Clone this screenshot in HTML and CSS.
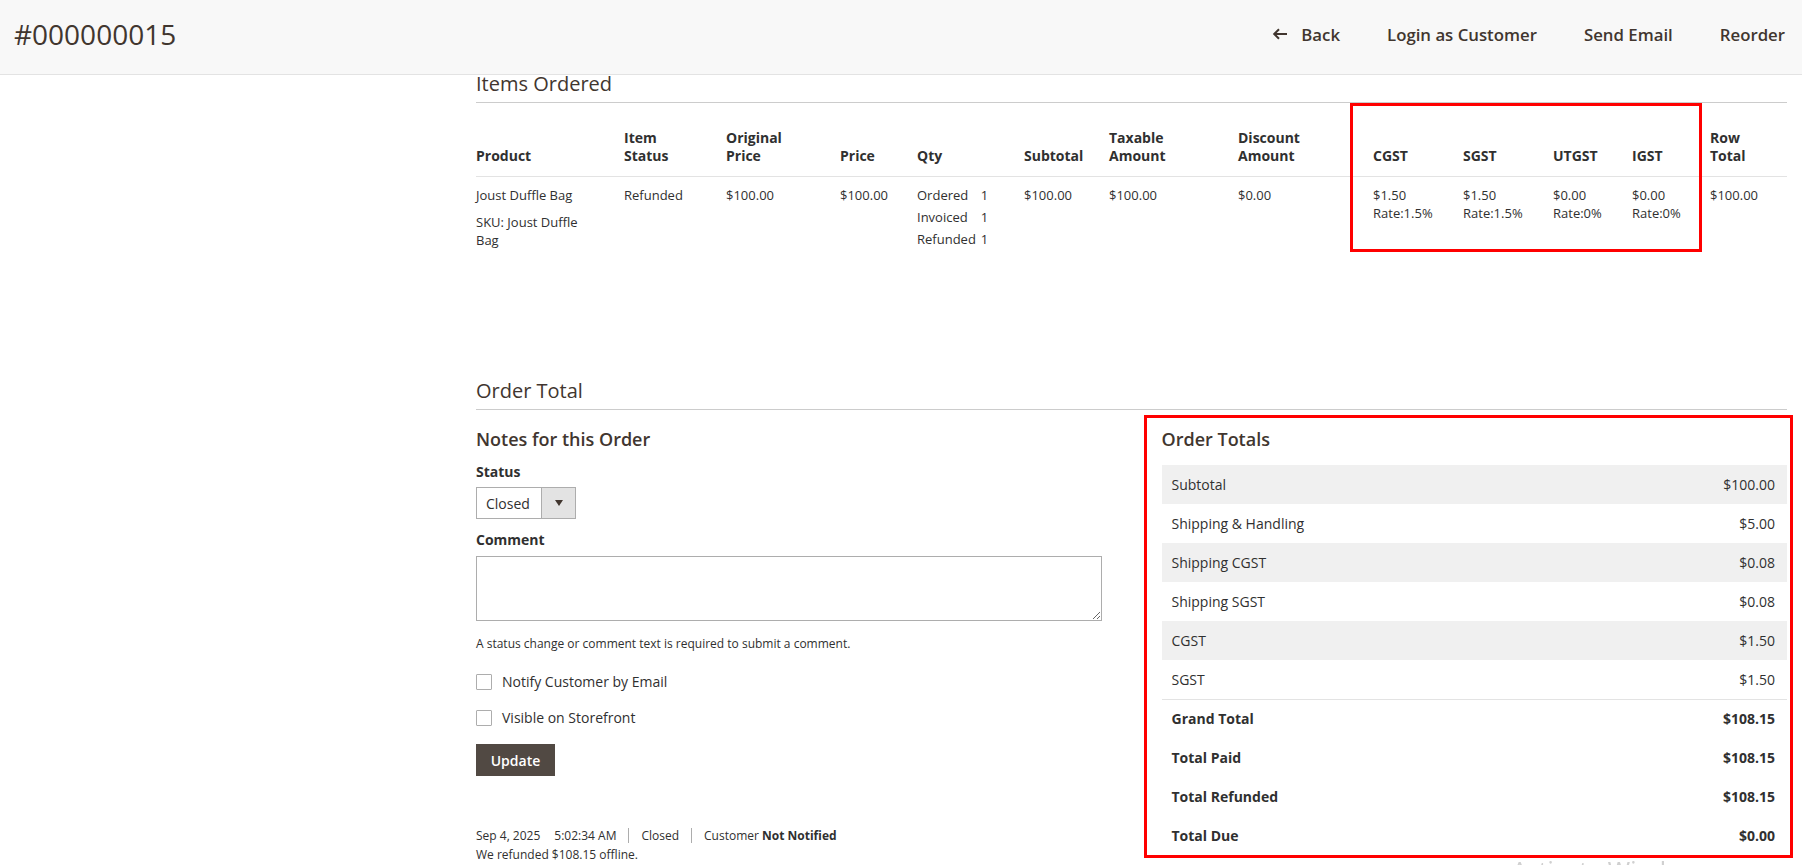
FILE: index.html
```html
<!DOCTYPE html>
<html lang="en">
<head>
    <meta charset="UTF-8">
    <meta name="viewport" content="width=device-width, initial-scale=1.0">
    <title>#000000015 / Orders</title>
    <link rel="stylesheet" href="styles.css">
</head>
<body>
    <!-- Page header -->
    <header class="page-header">
        <h1 class="page-title">#000000015</h1>
        <div class="page-actions">
            <button type="button" class="action-back">
                <svg width="16" height="12" viewBox="0 0 16 12" aria-hidden="true">
                    <path d="M15 6H2.5M7 1.2L2.2 6 7 10.8" fill="none" stroke="#41362f" stroke-width="2"/>
                </svg>
                Back
            </button>
            <button type="button">Login as Customer</button>
            <button type="button">Send Email</button>
            <button type="button">Reorder</button>
        </div>
    </header>

    <div class="page-columns">
        <aside class="side-col"></aside>

        <main class="main-col">
            <!-- Items Ordered -->
            <section class="items-section">
                <h2 class="section-title">Items Ordered</h2>
                <div class="items-wrap">
                    <table class="data-table">
                        <colgroup>
                            <col style="width:148px">
                            <col style="width:102px">
                            <col style="width:114px">
                            <col style="width:77px">
                            <col style="width:107px">
                            <col style="width:85px">
                            <col style="width:129px">
                            <col style="width:135px">
                            <col style="width:90px">
                            <col style="width:90px">
                            <col style="width:79px">
                            <col style="width:78px">
                            <col>
                        </colgroup>
                        <thead>
                            <tr>
                                <th>Product</th>
                                <th>Item<br>Status</th>
                                <th>Original<br>Price</th>
                                <th>Price</th>
                                <th>Qty</th>
                                <th>Subtotal</th>
                                <th>Taxable<br>Amount</th>
                                <th>Discount<br>Amount</th>
                                <th>CGST</th>
                                <th>SGST</th>
                                <th>UTGST</th>
                                <th>IGST</th>
                                <th>Row<br>Total</th>
                            </tr>
                        </thead>
                        <tbody>
                            <tr>
                                <td>
                                    <div>Joust Duffle Bag</div>
                                    <div class="sku">SKU: Joust Duffle<br>Bag</div>
                                </td>
                                <td>Refunded</td>
                                <td>$100.00</td>
                                <td>$100.00</td>
                                <td>
                                    <table class="qty-table">
                                        <tr><td class="qty-label">Ordered</td><td>1</td></tr>
                                        <tr><td class="qty-label">Invoiced</td><td>1</td></tr>
                                        <tr><td class="qty-label">Refunded</td><td>1</td></tr>
                                    </table>
                                </td>
                                <td>$100.00</td>
                                <td>$100.00</td>
                                <td>$0.00</td>
                                <td>$1.50<br>Rate:1.5%</td>
                                <td>$1.50<br>Rate:1.5%</td>
                                <td>$0.00<br>Rate:0%</td>
                                <td>$0.00<br>Rate:0%</td>
                                <td>$100.00</td>
                            </tr>
                        </tbody>
                    </table>
                </div>
            </section>

            <!-- Order Total -->
            <section class="total-section">
                <h2 class="section-title">Order Total</h2>
                <div class="total-grid">
                    <div class="notes-col">
                        <h3 class="block-title">Notes for this Order</h3>
                        <label class="field-label">Status</label>
                        <div class="select">
                            <select>
                                <option>Closed</option>
                            </select>
                            <span class="select-arrow">
                                <svg width="8" height="6" viewBox="0 0 8 6" aria-hidden="true"><path d="M0 0h8L4 6z" fill="#41362f"/></svg>
                            </span>
                        </div>
                        <label class="field-label comment-label">Comment</label>
                        <textarea class="comment"></textarea>
                        <p class="field-note">A status change or comment text is required to submit a comment.</p>
                        <label class="check check-first"><input type="checkbox"> Notify Customer by Email</label>
                        <label class="check"><input type="checkbox"> Visible on Storefront</label>
                        <button type="button" class="btn-update">Update</button>

                        <div class="history">
                            <div class="history-meta">
                                <span>Sep 4, 2025</span>
                                <span class="time">5:02:34 AM</span>
                                <span class="sep">Closed</span>
                                <span class="sep">Customer <b>Not Notified</b></span>
                            </div>
                            <div>We refunded $108.15 offline.</div>
                        </div>
                    </div>

                    <div class="totals-col">
                        <h3 class="block-title">Order Totals</h3>
                        <table class="totals-table">
                            <tbody>
                                <tr><td>Subtotal</td><td class="amount">$100.00</td></tr>
                                <tr><td>Shipping &amp; Handling</td><td class="amount">$5.00</td></tr>
                                <tr><td>Shipping CGST</td><td class="amount">$0.08</td></tr>
                                <tr><td>Shipping SGST</td><td class="amount">$0.08</td></tr>
                                <tr><td>CGST</td><td class="amount">$1.50</td></tr>
                                <tr><td>SGST</td><td class="amount">$1.50</td></tr>
                            </tbody>
                            <tfoot>
                                <tr><td>Grand Total</td><td class="amount">$108.15</td></tr>
                                <tr><td>Total Paid</td><td class="amount">$108.15</td></tr>
                                <tr><td>Total Refunded</td><td class="amount">$108.15</td></tr>
                                <tr><td>Total Due</td><td class="amount">$0.00</td></tr>
                            </tfoot>
                        </table>
                    </div>
                </div>
            </section>
        </main>
    </div>

    <div class="watermark">Activate Windows</div>
</body>
</html>
```

FILE: styles.css
```css
*, *::before, *::after {
    box-sizing: border-box;
}
body {
    margin: 0;
    font-family: "Open Sans", "Noto Sans", sans-serif;
    font-size: 14px;
    color: #303030;
    background: #fff;
    overflow: hidden;
}

/* header */
.page-header {
    height: 75px;
    padding: 0 17px 6px 14px;
    display: flex;
    align-items: center;
    justify-content: space-between;
    background: #f8f8f8;
    border-bottom: 1px solid #e3e3e3;
}
.page-title {
    margin: 0;
    font-size: 28px;
    font-weight: 400;
    line-height: 1;
    color: #41362f;
}
.page-actions {
    display: flex;
    gap: 47px;
}
.page-actions button {
    display: flex;
    align-items: center;
    gap: 13px;
    padding: 0;
    border: none;
    background: none;
    font-family: inherit;
    font-size: 16.8px;
    font-weight: 600;
    color: #41362f;
    cursor: pointer;
}

/* columns */
.page-columns {
    display: grid;
    grid-template-columns: 461px 1fr;
    padding: 0 15px;
}
.section-title {
    margin: 0;
    padding-bottom: 9px;
    font-size: 20px;
    font-weight: 400;
    line-height: 18px;
    color: #41362f;
    border-bottom: 1px solid #ccc;
}

/* items table */
.items-section {
    margin-bottom: 120px;
}
.items-wrap {
    position: relative;
}
.items-wrap::after {
    content: "";
    position: absolute;
    left: 874px;
    top: 0;
    width: 352px;
    height: 149px;
    border: 3px solid #f00;
}
.data-table {
    width: 100%;
    table-layout: fixed;
    border-collapse: collapse;
    font-size: 13px;
    line-height: 18px;
}
.data-table th {
    padding: 26px 8px 11px 0;
    text-align: left;
    vertical-align: bottom;
    font-size: 14px;
    font-weight: 700;
    color: #303030;
    border-bottom: 1px solid #e3e3e3;
}
.data-table td {
    padding: 9px 8px 10px 0;
    vertical-align: top;
}
.sku {
    margin-top: 9px;
}
.qty-table {
    border-collapse: collapse;
}
.data-table .qty-table td {
    padding: 0 0 4px;
}
.data-table .qty-table .qty-label {
    padding-right: 5px;
}

/* order total */
.total-grid {
    display: grid;
    grid-template-columns: 1fr 1fr;
    align-items: start;
    gap: 60px;
    padding-top: 17px;
}
.block-title {
    margin: 0;
    font-size: 18px;
    font-weight: 600;
    line-height: 24px;
    color: #41362f;
}
.notes-col {
    display: flex;
    flex-direction: column;
    align-items: flex-start;
}
.field-label {
    margin-top: 12px;
    font-weight: 700;
    line-height: 18px;
    color: #303030;
}
.select {
    display: flex;
    width: 100px;
    height: 32px;
    margin-top: 6px;
    border: 1px solid #adadad;
}
.select select {
    flex: 1;
    min-width: 0;
    padding: 0 0 0 9px;
    border: none;
    background: #fff;
    font-family: inherit;
    font-size: 14px;
    color: #303030;
    appearance: none;
}
.select-arrow {
    width: 34px;
    display: flex;
    align-items: center;
    justify-content: center;
    background: #e3e3e3;
    border-left: 1px solid #adadad;
}
.comment-label {
    margin-top: 12px;
}
.comment {
    width: 100%;
    height: 65px;
    margin-top: 7px;
    border: 1px solid #adadad;
    font-family: inherit;
}
.field-note {
    margin: 15px 0 0;
    font-size: 12px;
    line-height: 16px;
}
.check {
    display: flex;
    align-items: center;
    gap: 10px;
    line-height: 18px;
    margin-top: 18px;
}
.check-first {
    margin-top: 21px;
}
.check input {
    appearance: none;
    width: 16px;
    height: 16px;
    margin: 0;
    border: 1px solid #adadad;
    border-radius: 1px;
    background: #fff;
}
.btn-update {
    margin-top: 17px;
    width: 79px;
    height: 32px;
    border: none;
    background: #514943;
    color: #fff;
    font-family: inherit;
    font-size: 14px;
    font-weight: 600;
}
.history {
    margin-top: 50px;
    font-size: 12px;
    line-height: 19px;
}
.history-meta {
    display: flex;
}
.history-meta .time {
    margin-left: 14px;
}
.history-meta .sep {
    margin-left: 12px;
    padding-left: 12px;
    border-left: 1px solid #adadad;
    line-height: 15px;
    margin-top: 2px;
    margin-bottom: 2px;
}

/* totals */
.totals-col {
    position: relative;
}
.totals-col::after {
    content: "";
    position: absolute;
    left: -18px;
    right: -6px;
    top: -12px;
    bottom: -3px;
    border: 3px solid #f00;
}
.totals-table {
    width: 100%;
    margin-top: 14px;
    border-collapse: collapse;
    font-size: 14px;
}
.totals-table td {
    height: 39px;
    padding: 0 12px 0 10px;
}
.totals-table .amount {
    text-align: right;
}
.totals-table tbody tr:nth-child(odd) {
    background: #f0f0f0;
}
.totals-table tfoot td {
    font-weight: 700;
}
.totals-table tfoot tr:first-child td {
    border-top: 1px solid #e3e3e3;
}

.watermark {
    position: fixed;
    left: 1512px;
    top: 858px;
    font-family: "Noto Sans", sans-serif;
    font-size: 24px;
    color: #d0d0d0;
    line-height: 1;
}
```
